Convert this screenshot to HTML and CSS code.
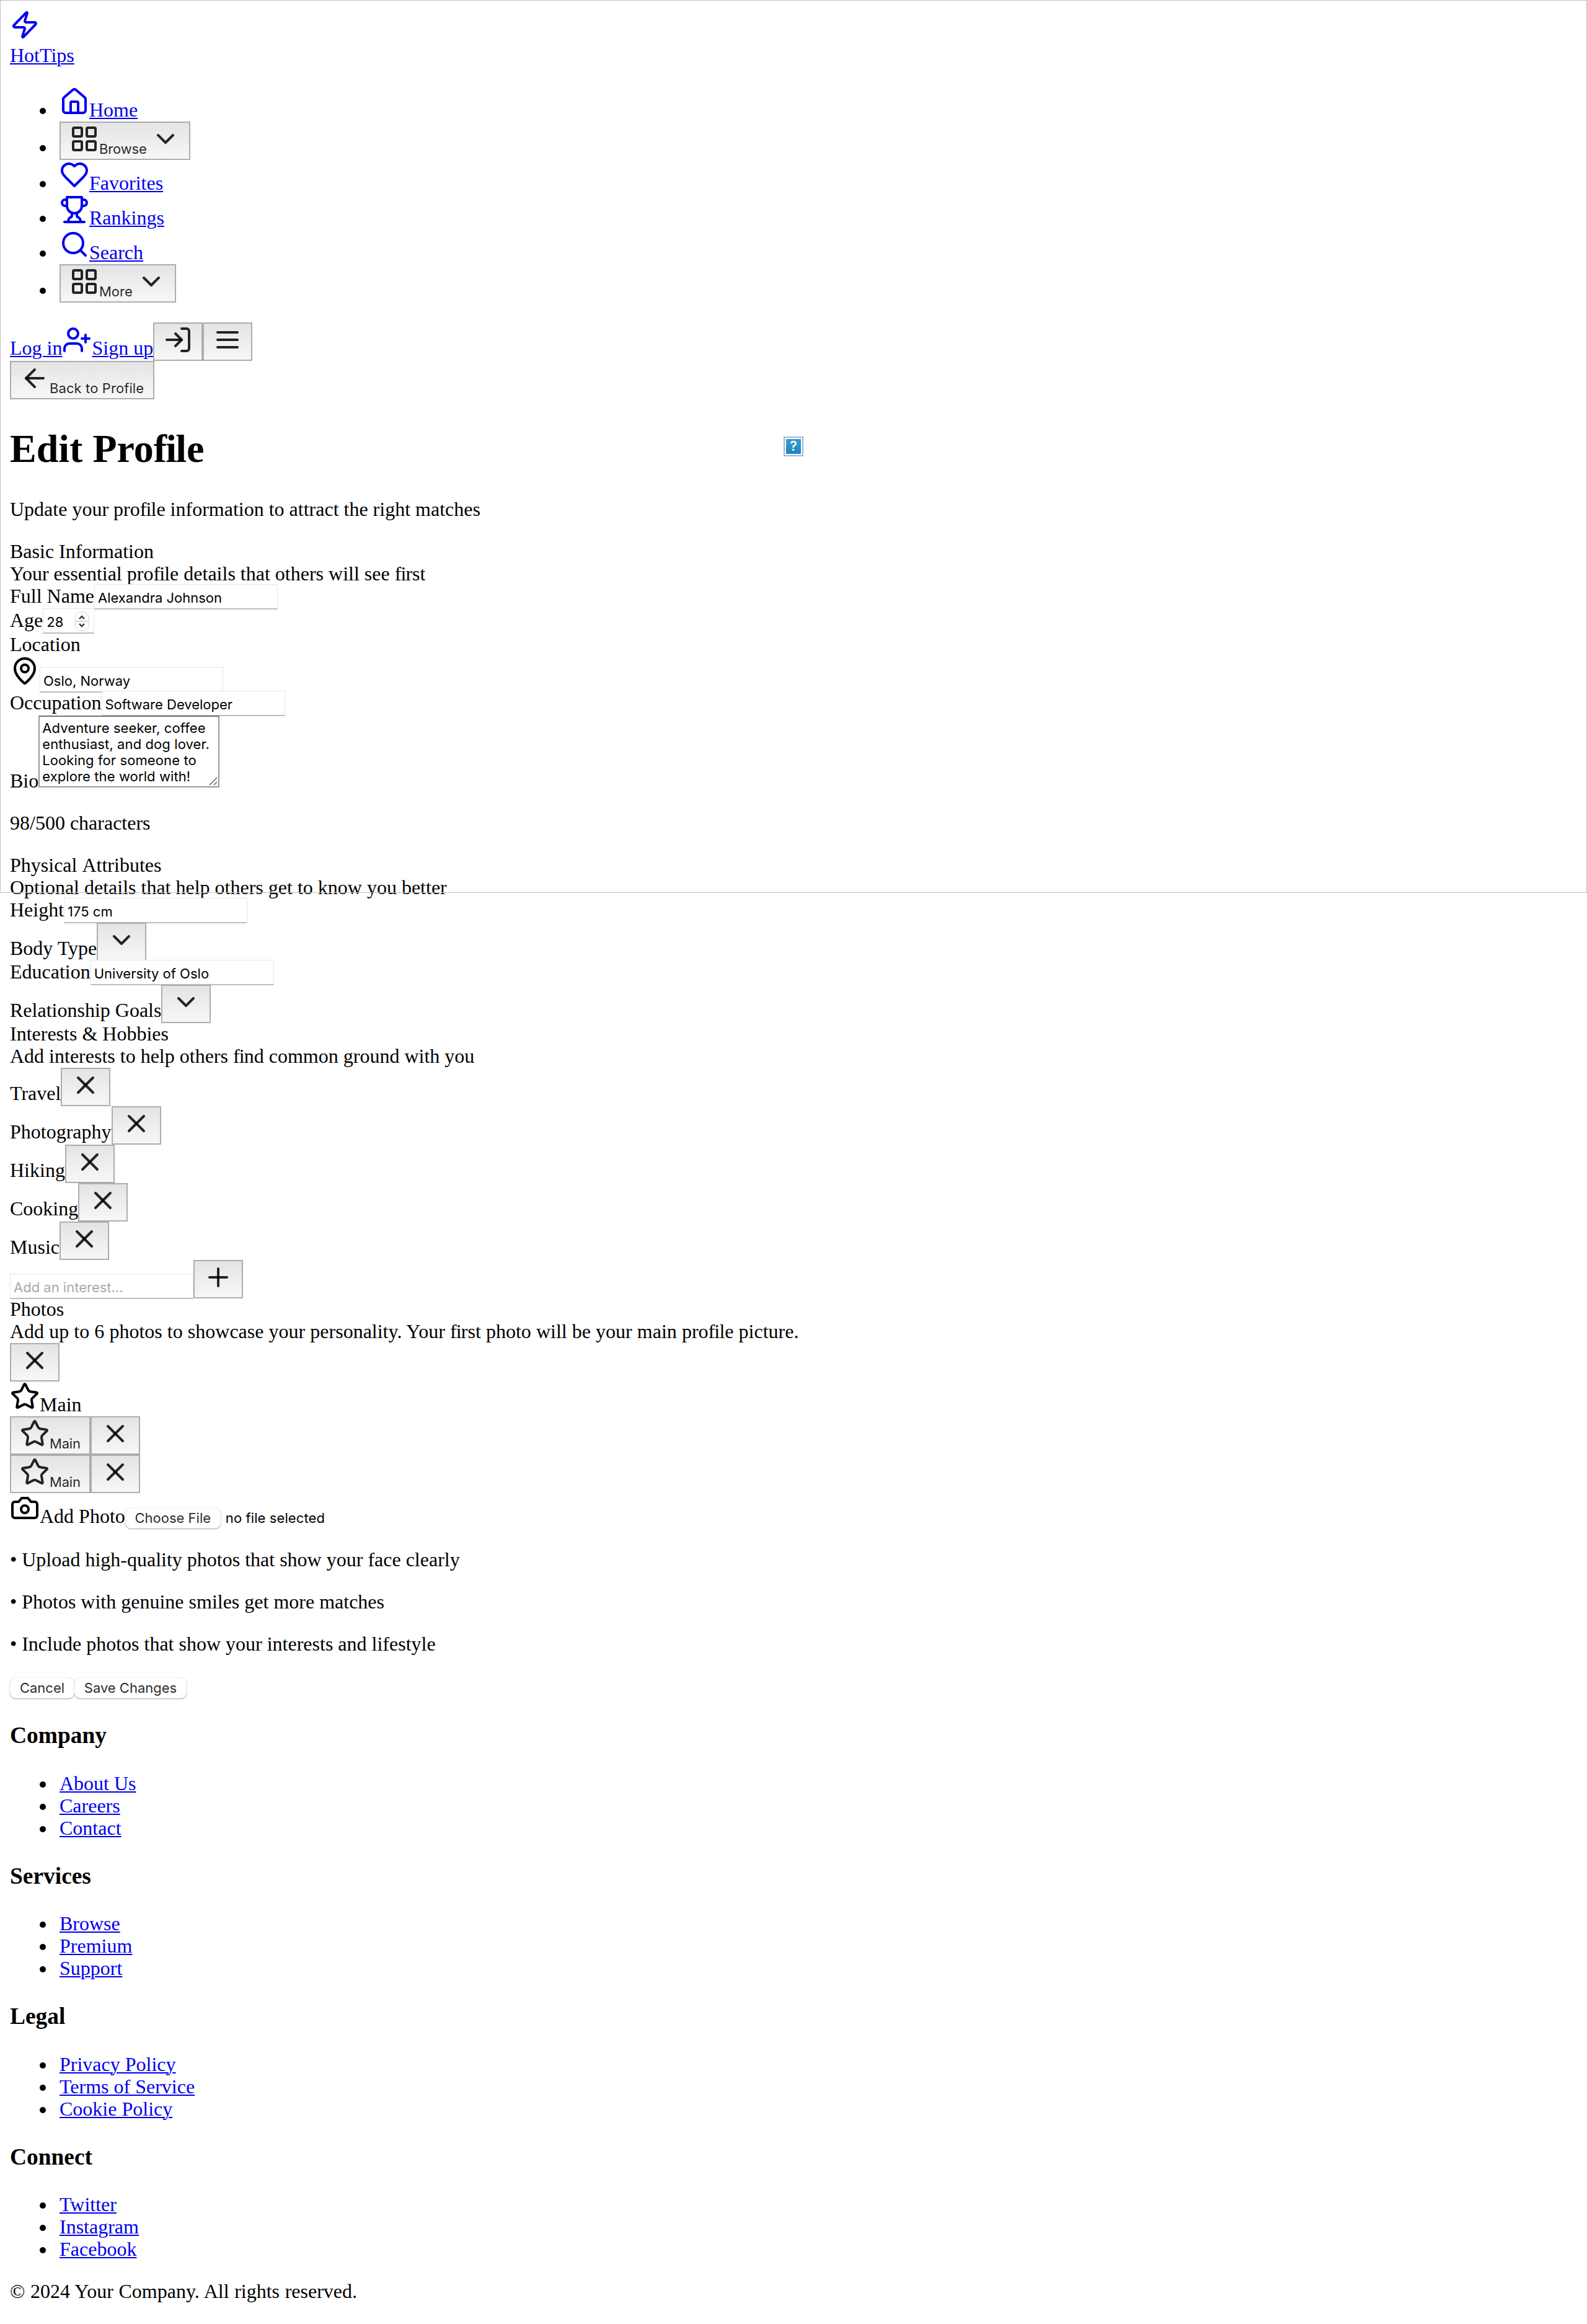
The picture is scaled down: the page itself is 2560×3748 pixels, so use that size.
FILE: index.html
```html
<!DOCTYPE html>
<html lang="en">
<head>
<meta charset="utf-8">
<title>Edit Profile - HotTips</title>
<link rel="stylesheet" href="styles.css">
</head>
<body>
<svg class="sprite" aria-hidden="true">
  <symbol id="zap" viewBox="0 0 24 24"><path d="M4 14a1 1 0 0 1-.78-1.63l9.9-10.2a.5.5 0 0 1 .86.46l-1.92 6.02A1 1 0 0 0 13 10h7a1 1 0 0 1 .78 1.63l-9.9 10.2a.5.5 0 0 1-.86-.46l1.92-6.02A1 1 0 0 0 11 14z"/></symbol>
  <symbol id="house" viewBox="0 0 24 24"><path d="M15 21v-8a1 1 0 0 0-1-1h-4a1 1 0 0 0-1 1v8"/><path d="M3 10a2 2 0 0 1 .709-1.528l7-5.999a2 2 0 0 1 2.582 0l7 5.999A2 2 0 0 1 21 10v9a2 2 0 0 1-2 2H5a2 2 0 0 1-2-2z"/></symbol>
  <symbol id="grid" viewBox="0 0 24 24"><rect width="7" height="7" x="3" y="3" rx="1"/><rect width="7" height="7" x="14" y="3" rx="1"/><rect width="7" height="7" x="14" y="14" rx="1"/><rect width="7" height="7" x="3" y="14" rx="1"/></symbol>
  <symbol id="chevron" viewBox="0 0 24 24"><path d="m6 9 6 6 6-6"/></symbol>
  <symbol id="heart" viewBox="0 0 24 24"><path d="M19 14c1.49-1.46 3-3.21 3-5.5A5.5 5.5 0 0 0 16.5 3c-1.76 0-3 .5-4.5 2-1.5-1.5-2.74-2-4.5-2A5.5 5.5 0 0 0 2 8.5c0 2.3 1.5 4.05 3 5.5l7 7Z"/></symbol>
  <symbol id="trophy" viewBox="0 0 24 24"><path d="M6 9H4.5a2.5 2.5 0 0 1 0-5H6"/><path d="M18 9h1.5a2.5 2.5 0 0 0 0-5H18"/><path d="M4 22h16"/><path d="M10 14.66V17c0 .55-.47.98-.97 1.21C7.85 18.75 7 20.24 7 22"/><path d="M14 14.66V17c0 .55.47.98.97 1.21C16.15 18.75 17 20.24 17 22"/><path d="M18 2H6v7a6 6 0 0 0 12 0V2Z"/></symbol>
  <symbol id="search" viewBox="0 0 24 24"><circle cx="11" cy="11" r="8"/><path d="m21 21-4.3-4.3"/></symbol>
  <symbol id="user-plus" viewBox="0 0 24 24"><path d="M16 21v-2a4 4 0 0 0-4-4H6a4 4 0 0 0-4 4v2"/><circle cx="9" cy="7" r="4"/><path d="M19 8v6"/><path d="M22 11h-6"/></symbol>
  <symbol id="log-in" viewBox="0 0 24 24"><path d="M15 3h4a2 2 0 0 1 2 2v14a2 2 0 0 1-2 2h-4"/><path d="m10 17 5-5-5-5"/><path d="M15 12H3"/></symbol>
  <symbol id="menu" viewBox="0 0 24 24"><path d="M4 12h16"/><path d="M4 6h16"/><path d="M4 18h16"/></symbol>
  <symbol id="arrow-left" viewBox="0 0 24 24"><path d="m12 19-7-7 7-7"/><path d="M19 12H5"/></symbol>
  <symbol id="pin" viewBox="0 0 24 24"><path d="M20 10c0 4.993-5.539 10.193-7.399 11.799a1 1 0 0 1-1.202 0C9.539 20.193 4 14.993 4 10a8 8 0 0 1 16 0"/><circle cx="12" cy="10" r="3"/></symbol>
  <symbol id="x" viewBox="0 0 24 24"><path d="M18 6 6 18"/><path d="m6 6 12 12"/></symbol>
  <symbol id="plus" viewBox="0 0 24 24"><path d="M5 12h14"/><path d="M12 5v14"/></symbol>
  <symbol id="star" viewBox="0 0 24 24"><path d="M11.525 2.295a.53.53 0 0 1 .95 0l2.31 4.679a2.123 2.123 0 0 0 1.595 1.16l5.166.756a.53.53 0 0 1 .294.904l-3.736 3.638a2.123 2.123 0 0 0-.611 1.878l.882 5.14a.53.53 0 0 1-.771.56l-4.618-2.428a2.122 2.122 0 0 0-1.973 0L6.396 21.01a.53.53 0 0 1-.77-.56l.881-5.139a2.122 2.122 0 0 0-.611-1.879L2.16 9.795a.53.53 0 0 1 .294-.906l5.165-.755a2.122 2.122 0 0 0 1.597-1.16z"/></symbol>
  <symbol id="camera" viewBox="0 0 24 24"><path d="M14.5 4h-5L7 7H4a2 2 0 0 0-2 2v9a2 2 0 0 0 2 2h16a2 2 0 0 0 2-2V9a2 2 0 0 0-2-2h-3l-2.5-3z"/><circle cx="12" cy="13" r="3"/></symbol>
</svg>

<div class="backdrop"><span class="missing">?</span></div>

<header>
  <a class="logo" href="#"><svg class="icon"><use href="#zap"/></svg><span class="link">HotTips</span></a>
  <ul class="nav">
    <li class="icon-row"><a class="row" href="#"><svg class="icon"><use href="#house"/></svg><span class="link">Home</span></a></li>
    <li class="button-row"><button class="btn"><svg class="icon"><use href="#grid"/></svg><span class="browse-label">Browse</span><svg class="icon"><use href="#chevron"/></svg></button></li>
    <li class="icon-row"><a class="row" href="#"><svg class="icon"><use href="#heart"/></svg><span class="link">Favorites</span></a></li>
    <li class="icon-row"><a class="row" href="#"><svg class="icon"><use href="#trophy"/></svg><span class="link">Rankings</span></a></li>
    <li class="icon-row"><a class="row" href="#"><svg class="icon"><use href="#search"/></svg><span class="link">Search</span></a></li>
    <li class="button-row"><button class="btn"><svg class="icon"><use href="#grid"/></svg><span class="more-label">More</span><svg class="icon"><use href="#chevron"/></svg></button></li>
  </ul>
  <div class="row button-row"><a class="link" href="#">Log in</a><a class="row" href="#"><svg class="icon"><use href="#user-plus"/></svg><span class="link">Sign up</span></a><button class="btn"><svg class="icon"><use href="#log-in"/></svg></button><button class="btn"><svg class="icon"><use href="#menu"/></svg></button></div>
</header>

<main>
  <div class="row button-row"><button class="btn"><svg class="icon"><use href="#arrow-left"/></svg><span class="back-label">Back to Profile</span></button></div>
  <h1>Edit Pro<span class="fi">fi</span>le</h1>
  <p>Update your pro<span class="fi">fi</span>le information to attract the right matches</p>

  <section>
    <div class="line">Basic Information</div>
    <div class="line">Your essential pro<span class="fi">fi</span>le details that others will see <span class="fi">fi</span>rst</div>
    <div class="row field-row name-row"><label>Full Name</label><input class="field" type="text" value="Alexandra Johnson"></div>
    <div class="row field-row age-row"><label>Age</label><span class="field age">28<span class="stepper"><svg viewBox="0 0 20 28"><path d="M6 10l4-4 4 4M6 18l4 4 4-4"/></svg></span></span></div>
    <div class="line">Location</div>
    <div class="row location-row"><svg class="icon"><use href="#pin"/></svg><input class="field" type="text" value="Oslo, Norway"></div>
    <div class="row field-row"><label>Occupation</label><input class="field" type="text" value="Software Developer"></div>
    <div class="row bio-row"><label>Bio</label><div class="bio">Adventure seeker, coffee<br>enthusiast, and dog lover.<br>Looking for someone to<br>explore the world with!<svg class="grip" viewBox="0 0 14 14"><path d="M1 13 13 1M8 13l5-5"/></svg></div></div>
    <p>98/500 characters</p>
  </section>

  <section>
    <div class="line physical">Physical Attributes</div>
    <div class="line">Optional details that help others get to know you better</div>
    <div class="row field-row"><label>Height</label><input class="field" type="text" value="175 cm"></div>
    <div class="row button-row"><label>Body Type</label><button class="btn"><svg class="icon"><use href="#chevron"/></svg></button></div>
    <div class="row field-row"><label>Education</label><input class="field" type="text" value="University of Oslo"></div>
    <div class="row button-row"><label>Relationship Goals</label><button class="btn"><svg class="icon"><use href="#chevron"/></svg></button></div>
  </section>

  <section>
    <div class="line">Interests &amp; Hobbies</div>
    <div class="line">Add interests to help others <span class="fi">fi</span>nd common ground with you</div>
    <div class="row button-row"><span>Travel</span><button class="btn"><svg class="icon"><use href="#x"/></svg></button></div>
    <div class="row button-row"><span>Photography</span><button class="btn"><svg class="icon"><use href="#x"/></svg></button></div>
    <div class="row button-row"><span>Hiking</span><button class="btn"><svg class="icon"><use href="#x"/></svg></button></div>
    <div class="row button-row"><span>Cooking</span><button class="btn"><svg class="icon"><use href="#x"/></svg></button></div>
    <div class="row button-row"><span>Music</span><button class="btn"><svg class="icon"><use href="#x"/></svg></button></div>
    <div class="row button-row"><input class="field" type="text" placeholder="Add an interest..."><button class="btn"><svg class="icon"><use href="#plus"/></svg></button></div>
  </section>

  <section>
    <div class="line">Photos</div>
    <div class="line photo-hint">Add up to 6 photos to showcase your personality. Your <span class="fi">fi</span>rst photo will be your main pro<span class="fi">fi</span>le picture.</div>
    <div class="row button-row"><button class="btn"><svg class="icon"><use href="#x"/></svg></button></div>
    <div class="row icon-row"><svg class="icon"><use href="#star"/></svg><span>Main</span></div>
    <div class="row button-row"><button class="btn"><svg class="icon"><use href="#star"/></svg><span class="main-label">Main</span></button><button class="btn"><svg class="icon"><use href="#x"/></svg></button></div>
    <div class="row button-row"><button class="btn"><svg class="icon"><use href="#star"/></svg><span class="main-label">Main</span></button><button class="btn"><svg class="icon"><use href="#x"/></svg></button></div>
    <div class="row icon-row"><svg class="icon"><use href="#camera"/></svg><label>Add Photo</label><button class="push file">Choose File</button><span class="file-status">no file selected</span></div>
    <div class="tips">
      <p>• Upload high-quality photos that show your face clearly</p>
      <p>• Photos with genuine smiles get more matches</p>
      <p>• Include photos that show your interests and lifestyle</p>
    </div>
  </section>

  <div class="row actions"><button class="push cancel">Cancel</button><button class="push save">Save Changes</button></div>
</main>

<footer>
  <h3>Company</h3>
  <ul><li><a class="link" href="#">About Us</a></li><li><a class="link" href="#">Careers</a></li><li><a class="link" href="#">Contact</a></li></ul>
  <h3>Services</h3>
  <ul><li><a class="link" href="#">Browse</a></li><li><a class="link" href="#">Premium</a></li><li><a class="link" href="#">Support</a></li></ul>
  <h3>Legal</h3>
  <ul><li><a class="link" href="#">Privacy Policy</a></li><li><a class="link" href="#">Terms of Service</a></li><li><a class="link" href="#">Cookie Policy</a></li></ul>
  <h3>Connect</h3>
  <ul><li><a class="link" href="#">Twitter</a></li><li><a class="link" href="#">Instagram</a></li><li><a class="link" href="#">Facebook</a></li></ul>
  <p class="copyright">© 2024 Your Company. All rights reserved.</p>
</footer>
</body>
</html>
```
FILE: styles.css
```css
* { box-sizing: border-box; }

body {
  margin: 0;
  padding: 16px;
  background: #fff;
  color: #000;
  font: 32px/34px "Liberation Serif", "Times New Roman", serif;
}

.sprite { display: none; }

.backdrop {
  position: absolute;
  top: 0;
  left: 0;
  width: 2560px;
  height: 1440px;
  border: 1px solid #c0c0c0;
  display: flex;
  align-items: center;
  justify-content: center;
  pointer-events: none;
}

.missing {
  width: 32px;
  height: 32px;
  border: 2px solid #9ab8d8;
  padding: 2px;
  background: linear-gradient(#3a9fd2, #2182bd) content-box;
  color: #fff;
  font: 600 21px/24px "Inter", sans-serif;
  text-align: center;
}

.icon {
  flex: none;
  display: block;
  width: 48px;
  height: 48px;
  fill: none;
  stroke: currentColor;
  stroke-width: 2;
  stroke-linecap: round;
  stroke-linejoin: round;
}

a { color: #0000ee; text-decoration: none; }

.link {
  text-decoration: underline;
  text-decoration-thickness: 2px;
  text-underline-offset: 2px;
}

/* tight f-i pair, as wide as the ligature */
.fi { letter-spacing: -0.0275em; }

.logo {
  display: flex;
  flex-direction: column;
  align-items: flex-start;
  gap: 8px;
  height: 92px;
}

.row { display: flex; align-items: baseline; white-space: nowrap; }
.icon-row { height: 56px; }
.button-row { height: 62px; }
.line { height: 36px; }
.physical { word-spacing: 1.8px; }
.photo-hint { word-spacing: 0.1px; }

ul { list-style: none; margin: 32px 0; padding: 0 0 0 80px; }
li { display: flex; align-items: baseline; }
li::before {
  content: "";
  width: 10px;
  height: 10px;
  margin: 0 22px 0 -32px;
  border-radius: 50%;
  background: #000;
  transform: translateY(-4px);
}

.btn {
  display: flex;
  align-items: baseline;
  height: 62px;
  margin: 0;
  padding: 2px 14px 0;
  border: 2px solid #adadad;
  background: linear-gradient(#e4e4e4, #f7f7f7);
  color: rgba(0, 0, 0, 0.85);
  font: 22px/26px "Inter", sans-serif;
  text-align: left;
}
.browse-label { width: 83px; letter-spacing: -0.15px; }
.more-label { width: 60px; }
.back-label { width: 153px; letter-spacing: 0.1px; }
.main-label { width: 50px; letter-spacing: -0.2px; }

h1 { margin: 43px 0; font-size: 64px; line-height: 74px; }
p { height: 36px; margin: 32px 0; }

.field-row { height: 38px; }
.name-row, .age-row { height: 39px; }
.location-row { height: 58px; }

.field {
  width: 296px;
  height: 41px;
  margin: -3px 0 0;
  padding: 5px 5px 0;
  border: 1px solid #e6e6e6;
  border-bottom: 2px solid #bdbdbd;
  border-radius: 0;
  outline: 0;
  background: #fff;
  color: #000;
  font: 22px/32px "Inter", sans-serif;
}
.field::placeholder { color: #a9a9a9; opacity: 1; }

.age { display: flex; justify-content: space-between; width: 83px; padding-right: 9px; }
.stepper {
  width: 20px;
  height: 28px;
  margin-top: 1px;
  border-radius: 8px;
  background: linear-gradient(#fff 46%, #dcdcdc 46%, #dcdcdc 53%, #fff 53%);
  box-shadow: 0 0 3px rgba(0, 0, 0, 0.35);
}
.stepper svg { display: block; width: 20px; height: 28px; fill: none; stroke: #333; stroke-width: 2.4; }

.bio-row { height: 124px; align-items: flex-end; padding-bottom: 8px; }
.bio-row label { margin-bottom: -6px; }
.bio {
  position: relative;
  width: 292px;
  height: 116px;
  padding: 5px 4px;
  border: 2px solid #999;
  border-top-color: #757575;
  background: #fff;
  font: 22px/26px "Inter", sans-serif;
  letter-spacing: 0.1px;
}
.grip {
  position: absolute;
  right: 1px;
  bottom: 1px;
  width: 14px;
  height: 14px;
  fill: none;
  stroke: #666;
  stroke-width: 1.6;
}

.push {
  height: 33px;
  margin: 0;
  padding: 0 0 1px;
  border: 0;
  border-radius: 9px;
  background: #fff;
  box-shadow: 0 0 1px rgba(0, 0, 0, 0.3), 0 1px 2px rgba(0, 0, 0, 0.35);
  color: rgba(0, 0, 0, 0.85);
  font: 22px/32px "Inter", sans-serif;
  white-space: nowrap;
}
.file { width: 154px; margin-right: 8px; }
.file-status { font: 22px/26px "Inter", sans-serif; letter-spacing: 0.1px; }
.tips p:first-child { margin-top: 34px; }

.actions { height: 38px; padding-top: 4px; }
.cancel { width: 104px; }
.save { width: 181px; }

h3 { margin: 37.3px 0; font-size: 37.44px; line-height: 44px; }
footer ul { margin: 0; }
footer li { height: 36px; }
.copyright { margin-bottom: 0; word-spacing: 0.6px; }
```
